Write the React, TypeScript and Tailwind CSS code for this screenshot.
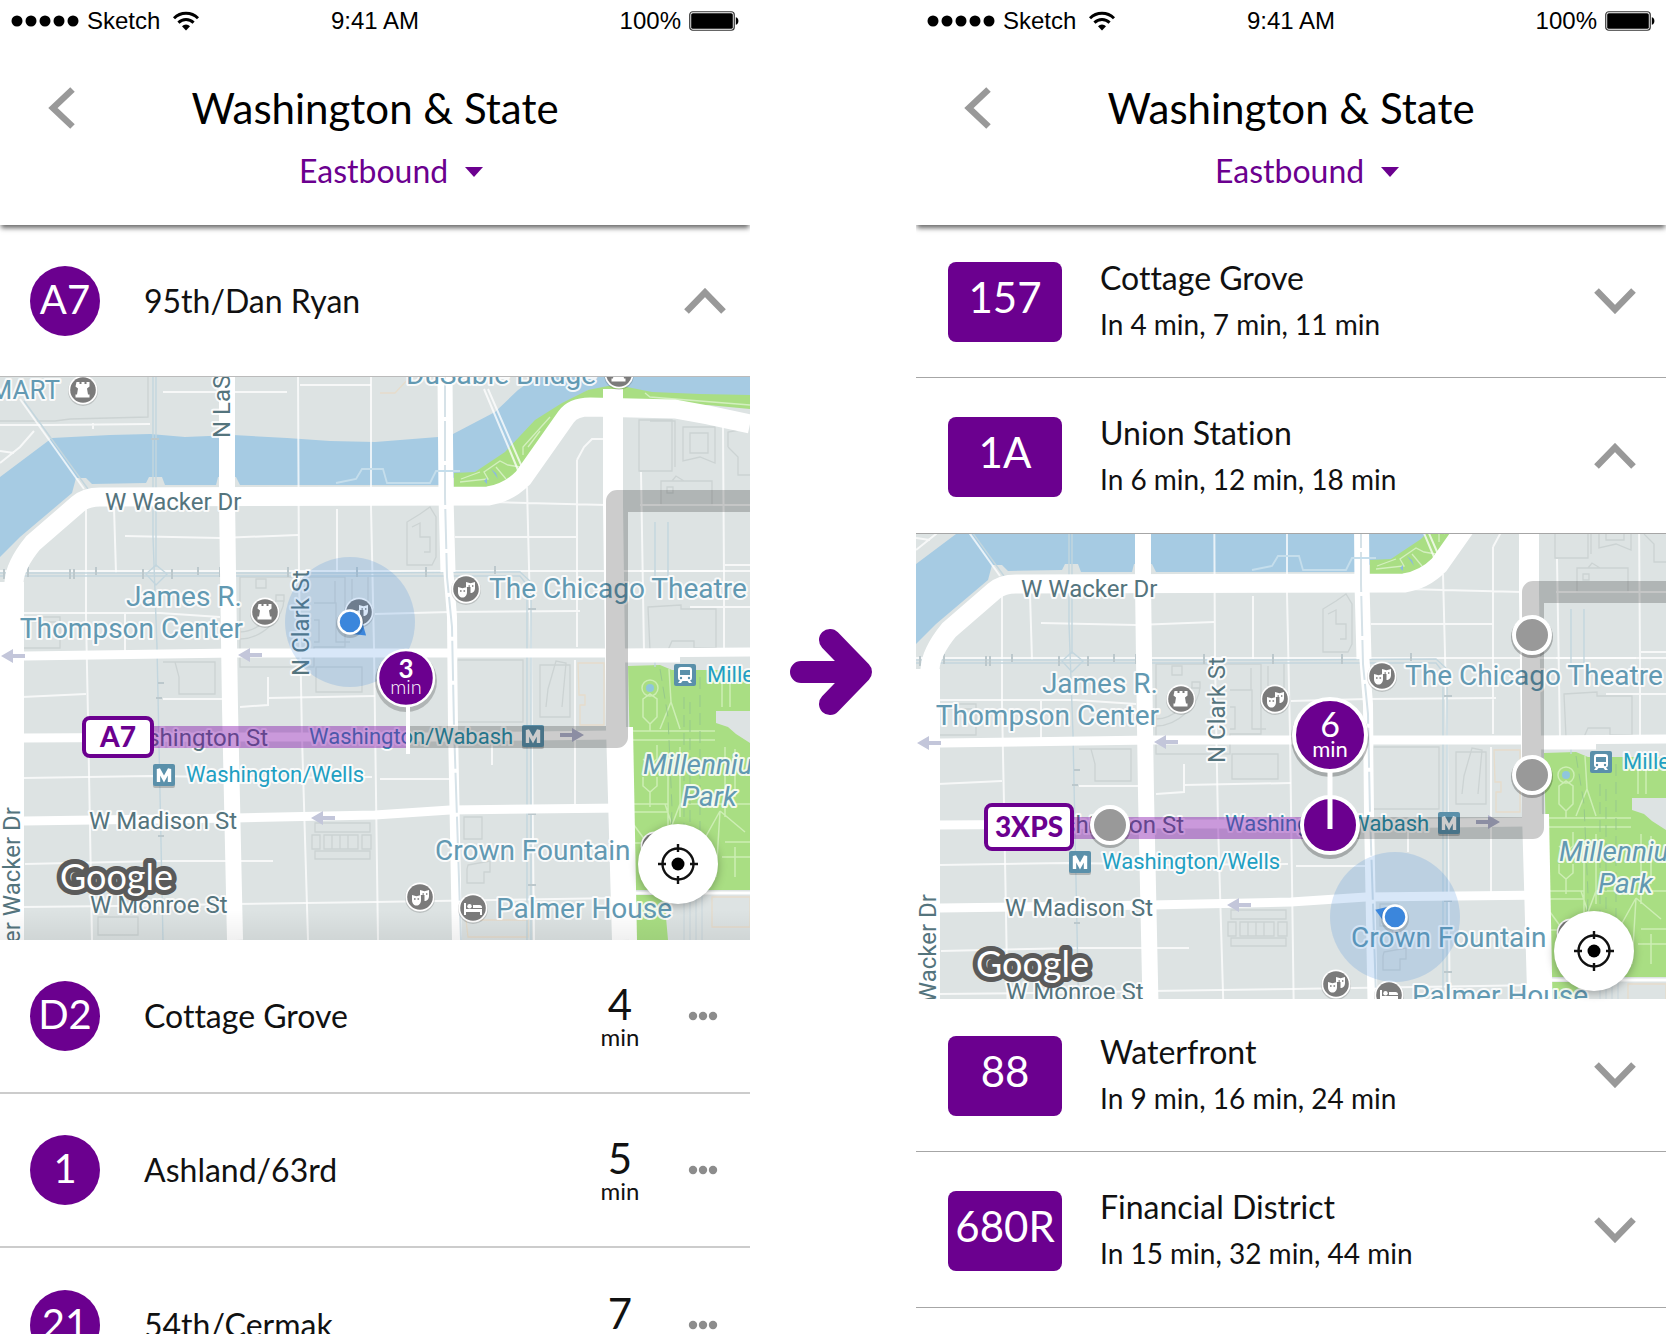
import React from 'react';

const PURPLE = '#6b008f';

/* ---------- small icons ---------- */

function WifiIcon() {
  return (
    <svg viewBox="0 0 28 20" className="w-7 h-5" aria-hidden="true">
      <g fill="none" stroke="#000" strokeWidth="2.9">
        <path d="M2 7.2a17 17 0 0 1 24 0" />
        <path d="M6.4 11.6a10.8 10.8 0 0 1 15.2 0" />
      </g>
      <path d="M14 19.4l-4-4.2a5.8 5.8 0 0 1 8 0z" fill="#000" />
    </svg>
  );
}

function BatteryIcon() {
  return (
    <svg viewBox="0 0 50 20" className="w-[50px] h-5" aria-hidden="true">
      <rect x="0.75" y="0.75" width="44.5" height="18.5" rx="3" fill="none" stroke="#333" strokeWidth="1.2" />
      <rect x="2.2" y="2.2" width="41.6" height="15.6" rx="1.6" fill="#000" />
      <path d="M46.8 6.2c2 .6 2.6 2 2.6 3.8s-.6 3.2-2.6 3.8z" fill="#000" />
    </svg>
  );
}

function Chevron({ up = false }: { up?: boolean }) {
  return (
    <svg viewBox="0 0 42 26" className="w-[42px] h-[26px]" aria-hidden="true">
      <path d={up ? 'M2.5 23.5L21 4.5L39.500 23.500' : 'M2.5 2.5L21 21.5L39.500 2.500'} fill="none" stroke="#999" strokeWidth="6.500" />
    </svg>
  );
}

function Dots() {
  return (
    <svg viewBox="0 0 30 10" className="w-[30px] h-[10px]" aria-hidden="true">
      <g fill="#8c8c8c">
        <circle cx="5" cy="5" r="4.200" />
        <circle cx="15" cy="5" r="4.200" />
        <circle cx="25" cy="5" r="4.200" />
      </g>
    </svg>
  );
}

/* ---------- shared phone chrome ---------- */

function StatusBar() {
  return (
    <div className="grid grid-cols-3 items-center h-[42px] px-[11px] font-['Liberation_Sans',sans-serif] text-2xl leading-6 text-black">
      <div className="flex items-center gap-2">
        <svg viewBox="0 0 68 12" className="w-[68px] h-3" aria-hidden="true">
          {[6, 20, 34, 48, 62].map((x) => (
            <circle key={x} cx={x} cy="6" r="5.500" />
          ))}
        </svg>
        <span>Sketch</span>
        <span className="pl-1">
          <WifiIcon />
        </span>
      </div>
      <div className="text-center">9:41 AM</div>
      <div className="flex items-center justify-end gap-2">
        <span>100%</span>
        <BatteryIcon />
      </div>
    </div>
  );
}

function Header({ id }: { id: string }) {
  return (
    <header className="relative z-10 h-[225px] bg-white shadow-[0_4px_5px_-1px_rgba(0,0,0,0.6)]">
      <StatusBar />
      <div className="grid grid-cols-[80px_1fr_80px] items-center pt-[38px]">
        <button type="button" aria-label="Back" className="justify-self-end pr-1">
          <svg viewBox="0 0 28 42" className="w-7 h-[42px]" aria-hidden="true">
            <path d="M24.500 2.500L5 21L24.500 39.500" fill="none" stroke="#999" strokeWidth="6.500" />
          </svg>
        </button>
        <h1 className="text-center text-[42px] leading-[56px] text-black whitespace-nowrap">Washington &amp; State</h1>
      </div>
      <div className="flex justify-center pt-[11px] pl-8">
        <label htmlFor={id} className="sr-only">
          Direction
        </label>
        <div className="relative">
          <select id={id} className="appearance-none bg-transparent w-[184px] h-12 text-[32px] leading-[48px] text-[#6b008f]">
            <option>Eastbound</option>
            <option>Westbound</option>
          </select>
          <svg viewBox="0 0 18 10" className="pointer-events-none absolute right-0 top-5 w-[18px] h-[10px]" aria-hidden="true">
            <path d="M0 0H18L9 10z" fill={PURPLE} />
          </svg>
        </div>
      </div>
    </header>
  );
}

/* ---------- map drawing ---------- */

function Poi({ x, y, kind }: { x: number; y: number; kind: 'rook' | 'mask' | 'bed' }) {
  return (
    <g transform={`translate(${x} ${y})`}>
      <circle cy="1" r="15" fill="#000" opacity="0.15" />
      <circle r="14.500" fill="#fff" />
      <circle r="12.800" fill="#7b7b7b" />
      {kind === 'rook' && (
        <path fill="#fff" d="M-6.500-8h3v2h2v-2h3v2h2v-2h3v4.500l-2.500 2 1 6h1.500v3h-14v-3h1.500l1-6-2.500-2z" />
      )}
      {kind === 'mask' && (
        <>
          <path fill="#fff" d="M0-7l4.500 1.200L9-7v6c0 3-2 5-4.500 5V-2H0z" />
          <path fill="#fff" d="M-8-2l4.500 1.200L1-2v5c0 3.500-2 5.500-4.500 5.500S-8 6.500-8 3z" />
          <path d="M-6 2h1.600M-2.500 2h1.600M2.500-3h1.400M6-3h1.400" stroke="#7b7b7b" strokeWidth="1.300" />
        </>
      )}
      {kind === 'bed' && (
        <>
          <path fill="#fff" d="M-9-5h2v6H9v6H7V4H-7v3h-2zM0-3h6.500q2.500 0 2.500 2.500V0H0z" />
          <circle cx="-3.500" cy="-1.800" r="2.200" fill="#fff" />
        </>
      )}
    </g>
  );
}

function Metro({ x, y }: { x: number; y: number }) {
  return (
    <g transform={`translate(${x} ${y})`}>
      <rect x="-11" y="-10" width="22" height="23" rx="2" fill="#000" opacity="0.2" />
      <rect x="-11" y="-11" width="22" height="22" rx="2" fill="#5a90aa" />
      <path d="M-5.500 7V-6L0 4L5.500-6V7" fill="none" stroke="#fff" strokeWidth="3.400" />
    </g>
  );
}

function StreetArrow({ x, y, right = false }: { x: number; y: number; right?: boolean }) {
  return (
    <path
      transform={`translate(${x} ${y})${right ? ' rotate(180)' : ''}`}
      d="M-12 0L0-7V-2H12V2H0V7z"
      fill={right ? '#b0b2cc' : '#c3c6da'}
    />
  );
}

function BaseMap() {
  return (
    <g>
      <rect width="750" height="563" fill="#dde3e3" />

      {/* river */}
      <path
        fill="#a6cbe3"
        d="M0 100L52 61L110 58L150 57L185 60L233 58L287 61L330 64L375 65L438 60L453 57L495 35L518 13L536 0H750V22H610L588 13L540 50L500 90L455 100L440 108H240L236 100H218L216 108H165L162 100H149L146 106L92 107L86 101H76L72 116L20 160L0 180z"
      />
      {/* riverwalk */}
      <path
        fill="#a9de83"
        d="M454 96L475 95L505 75L535 43L562 26L588 13L608 9L627 10L652 15L700 17L750 18V32L708 28L610 26L580 30L540 70L518 98L492 111H454z"
      />
      <g fill="none" stroke="#d3efbf" strokeWidth="1.300">
        <path d="M460 105L488 102L484 95L500 84L508 88L520 90M461 102L480 95M496 90L506 102M523 78V70L550 40M528 70L540 54M645 16L650 20L750 28" />
      </g>
      <path d="M491 92l5 4 2 6zM484 104l3-3v6z" fill="#8db9de" />

      {/* millennium park */}
      <path fill="#a9de83" d="M628 289L660 288L672 293H750V513H633zM633 518H664L668 563H633z" />
      <path fill="#dde3e3" d="M716 334H750V366L736 357L728 350L716 346z" />
      <circle cx="650" cy="311" r="4" fill="#8fc6dc" />
      <g fill="none" stroke="#cdeeb4" strokeWidth="1.500">
        <circle cx="650" cy="311" r="8" />
        <path d="M643 322L650 317L657 322V340L650 347L643 340zM630 354H715M632 363H715M669 292L671 325L660 352M671 325L680 352M722 292V330M730 292V330M643 400V409L650 415L657 409V400M643 382L650 388L657 382V368M650 415V430M630 427H668M630 435H668M668 380V460M680 370V440M634 448L650 470M665 427L672 448L680 427H750M720 434L700 470M720 434L745 455M720 434L716 500M650 347V354M634 466H650V500M725 465H750M722 480H750M735 470V500M725 370V440M735 372V420" />
      </g>
      <g fill="none" stroke="#97c98b" strokeWidth="1" strokeDasharray="12 6">
        <path d="M660 292L668 340L672 430L670 500M684 320V500M690 325V512M700 300V512" />
      </g>
      <path d="M640 513H750V563H670L664 516z" fill="#dde3e3" />
      <path d="M684 516V563M690 516V563M696 516V563M702 516V563" stroke="#c9d6dc" strokeWidth="1" />

      {/* building outlines */}
      <g fill="none" stroke="#ccd3d3" strokeWidth="1.300">
        <path d="M0 44H55L70 42L148 40V0M163 285H175L179 300V317H215V285zM240 200H345V270H314V290H240zM256 202h10v9h-10zM276 218h8v6h-8zM240 262C262 262 284 240 284 222M240 255C258 255 274 238 276 222M314 226H336V265H350M335 226V204M352 202V226H368V200M314 243h5v22h-5" />
        <path d="M407 188V145L420 137L430 130L436 140V180L432 188zM412 150L420 146V160H430V175H424M457 283H523V345H457zM316 290H362V315H316zM540 288H570V340H540zM546 330L548 312L556 284L566 286L562 330M648 230L681 228V232H716V271H694V264H672L668 273H650z" />
        <path d="M639 43H672V94H639zM650 44H675V90M683 50H715V86L700 80L683 84zM690 56H708V76H690zM728 70V55L745 52M728 70L738 80V98H750M661 104H712V128H661zM667 110h6v6h-6zM672 104L676 99L684 104" />
        <path d="M315 446H370V455H315zM312 458H320V472H312zM324 458H358V472H324zM332 458V472M340 458V472M348 458V472M362 458H371V472H362zM315 474H370V482H315zM464 440H482V462H464zM468 488L490 484V495H484V506H467V492zM98 540H138V558H98zM22 240H60V271H22zM26 245H56" />
      </g>
      <g fill="none" stroke="#e6dccb" strokeWidth="1.300">
        <path d="M578 286H604V348H580V328H585V318H579zM466 543H528V560H468zM712 520H750V550H712zM380 16H395L410 0" />
      </g>

      {/* alleys and minor streets */}
      <g fill="none" stroke="#fff" strokeOpacity="0.75" strokeWidth="2">
        <path d="M0 48H50L150 47M163 15H287M300 8H371M34 54L20 70L0 86M0 74L14 76M125 159L220 161L298 158M22 236L160 236L220 240M125 277V237M22 320L86 317M163 322H222M240 330L268 328V300M268 321L375 319M24 401L150 399L225 400M240 401L372 400M25 487L160 484L273 484M22 530L120 529L235 527L375 525L620 521M93 46V52" />
        <path d="M86 130L86 240L88 340L92 563M114 130L116 196M298 0L299 200L302 360L308 563M337 132V195M371 0V130L374 270L378 563M527 110L531 270L534 563M577 83V270M577 83L584 70L592 62H605M575 283V430M641 95L644 275M723 50L724 200L724 275M455 124L527 126L606 128M455 160H577M375 237L450 235L580 234M380 402H450M492 360V388M640 194H720M690 230H750M640 128H750M725 188H750" />
        <path d="M0 194H750" />
        <path d="M484 12L518 93M488 12L522 90" />
        <path d="M20 22L84 112" />
      </g>

      {/* elevated tracks */}
      <g fill="none" stroke="#c3d6de" strokeWidth="1.400">
        <path d="M0 196H360L520 195L531 205V563M0 199H520L527 208V563M153 0V160L157 270L163 563M156 0V190M443 0V120M448 0V120L447 190M24 24L88 112M655 145V200M668 145V200M655 275V290" />
        <path d="M156 188L146 197L156 208L167 197z" />
      </g>
      <g stroke="#bcc8cc" strokeWidth="2">
        <path d="M4 192v10M28 190v10M70 192v10M74 192v10M96 190v8M143 192v10M172 192v10M198 190v8M220 190v10M288 190v10M357 190v10M426 190v10M495 189v8M158 306h6M156 321h6M158 459h6M528 437h8M528 232h8M528 508h8M151 62h8" />
      </g>

      {/* arterial streets */}
      <g fill="none" stroke="#fff">
        <path d="M0 279L25 279L235 276L450 276L620 276L750 275" strokeWidth="9" />
        <path d="M615 281H680" strokeWidth="9" />
        <path d="M22 361L235 360L450 360L615 358" strokeWidth="9" />
        <path d="M24 444L235 441L375 438L450 433L622 431" strokeWidth="9" />
        <path d="M227 0V120L228 195L230 330L235 563" strokeWidth="16" />
        <path d="M445 0L446 120L448 195" strokeWidth="15" />
        <path d="M448 190L452 240L453 350L457 563" strokeWidth="10" />
        <path d="M613 12V128L616 350L622 563" strokeWidth="20" />
        <path d="M629 350L633 563" strokeWidth="8" />
        <path d="M632 516H750" strokeWidth="3" />
        <path
          d="M13 563L12 420L12 272L14 205Q15 188 33 166L78 127Q86 120 100 120L488 119Q508 116 523 101L566 40Q573 30 590 30L675 32L708 38L750 47"
          strokeWidth="19"
          strokeLinejoin="round"
        />
        <path d="M12 205V563" strokeWidth="24" />
      </g>
      <path d="M445 0V120L447 200L452 250L454 350L461 563" fill="none" stroke="#d6e2e8" strokeWidth="2" strokeDasharray="40 4" />
      <path d="M336 106L356 102L362 92H375L383 92L387 106H430L436 94H460" fill="none" stroke="#c5deec" strokeWidth="1.800" />

      <StreetArrow x={13} y={279} />
      <StreetArrow x={250} y={278} />
      <StreetArrow x={323} y={441} />

      <Poi x={83} y={13} kind="rook" />
      <Poi x={265} y={235} kind="rook" />
      <Poi x={359} y={235} kind="mask" />
      <Poi x={466} y={212} kind="mask" />
      <Poi x={420} y={520} kind="mask" />
      <Poi x={473} y={531} kind="bed" />
      <Poi x={619} y={-3} kind="rook" />
      <Poi x={655} y={469} kind="mask" />
      <Metro x={164} y={398} />
      <Metro x={533} y={359} />
      <StreetArrow x={572} y={358} right />
      <g transform="translate(685 298)">
        <rect x="-11" y="-11" width="22" height="22" rx="2" fill="#5a90aa" />
        <path fill="#fff" d="M-4-8H4q3 0 3 3V3q0 2-2 2.500L7 8H4L2.500 6h-5L-4 8h-3l2-2.500Q-7 5-7 3v-8q0-3 3-3z" />
        <path fill="#5a90aa" d="M-5-5H5V0H-5z" />
        <circle cx="-4" cy="3" r="1.200" fill="#5a90aa" />
        <circle cx="4" cy="3" r="1.200" fill="#5a90aa" />
      </g>

      {/* labels */}
      <g className="font-['Roboto',sans-serif]" stroke="#fff" strokeOpacity="0.85" strokeWidth="4" strokeLinejoin="round" paintOrder="stroke">
        <g fill="#54747d" fontSize="24">
          <text x="105" y="133">W Wacker Dr</text>
          <text x="268" y="369" textAnchor="end">W Washington St</text>
          <text x="89" y="452">W Madison St</text>
          <text x="90" y="536">W Monroe St</text>
          <text transform="translate(230 61) rotate(-90)">N LaSalle St</text>
          <text transform="translate(309 299) rotate(-90)">N Clark St</text>
          <text transform="translate(20 430) rotate(-90)" textAnchor="end">N Upper Wacker Dr</text>
        </g>
        <g fill="#6299b2" fontSize="28">
          <text x="60" y="22" textAnchor="end" fontSize="26">MART</text>
          <text x="406" y="7">DuSable Bridge</text>
          <text x="242" y="229" textAnchor="end">James R.</text>
          <text x="243" y="261" textAnchor="end">Thompson Center</text>
          <text x="489" y="221">The Chicago Theatre</text>
          <text x="435" y="483">Crown Fountain</text>
          <text x="496" y="541">Palmer House</text>
          <g fontStyle="italic">
            <text x="643" y="397">Millennium</text>
            <text x="682" y="429">Park</text>
          </g>
        </g>
        <g fill="#229fc2" fontSize="22">
          <text x="186" y="405">Washington/Wells</text>
          <text x="309" y="367" fill="#2f93ae">Washington/Wabash</text>
          <text x="707" y="305">Millennium St</text>
        </g>
      </g>
      <text
        x="60"
        y="513"
        className="font-['Lato',sans-serif]"
        fontSize="36"
        fill="#fff"
        stroke="#5a5a5a"
        strokeWidth="10"
        strokeLinejoin="round"
        paintOrder="stroke"
      >
        Google
      </text>
    </g>
  );
}

function Route({ from, split, top, bottom }: { from: number; split: number; top: number; bottom: number }) {
  return (
    <g fill="none" strokeWidth="22" strokeLinejoin="round">
      <path d={`M${split} ${bottom}H617V${top}H750`} stroke="#000" strokeOpacity="0.2" />
      <path d={`M${from} ${bottom}H${split}`} stroke="#7b00a5" strokeOpacity="0.4" />
    </g>
  );
}

function Stop({ x, y }: { x: number; y: number }) {
  return (
    <g>
      <circle cx={x} cy={y + 2} r="21" fill="#000" opacity="0.25" />
      <circle cx={x} cy={y} r="18" fill="#999" stroke="#fff" strokeWidth="4" />
    </g>
  );
}

function RouteTag({ x, y, w, h, label }: { x: number; y: number; w: number; h: number; label: string }) {
  return (
    <g>
      <rect x={x + 2} y={y + 2} width={w - 4} height={h - 4} rx="6" fill="#fff" stroke={PURPLE} strokeWidth="4" />
      <text x={x + w / 2} y={y + h / 2 + 10} textAnchor="middle" fontSize="28" fontWeight="900" fill={PURPLE}>
        {label}
      </text>
    </g>
  );
}

function UserLocation({ x, y, heading }: { x: number; y: number; heading: number }) {
  return (
    <g transform={`translate(${x} ${y})`}>
      <circle r="65" fill="#3b86dc" fillOpacity="0.2" />
      <path transform={`rotate(${heading})`} d="M21 0L9-8V8z" fill="#3b86dc" />
      <circle cy="2" r="14" fill="#000" opacity="0.15" />
      <circle r="11.500" fill="#3b86dc" stroke="#fff" strokeWidth="2.500" />
    </g>
  );
}

function LocateIcon() {
  return (
    <svg viewBox="0 0 42 42" className="w-[42px] h-[42px]" aria-hidden="true">
      <g fill="none" stroke="#111" strokeWidth="2.400">
        <circle cx="21" cy="21" r="15.500" />
        <path d="M21 1V9M21 33V41M1 21H9M33 21H41" />
      </g>
      <circle cx="21" cy="21" r="6.500" fill="#000" />
    </svg>
  );
}

function LocateButton() {
  return (
    <button
      type="button"
      aria-label="Center on my location"
      className="flex items-center justify-center w-20 h-20 rounded-full bg-white shadow-[0_2px_10px_rgba(0,0,0,0.3)]"
    >
      <LocateIcon />
    </button>
  );
}

function LeftMap() {
  return (
    <div className="relative">
      <svg viewBox="0 0 750 563" className="block w-full h-auto font-['Lato',sans-serif]" role="img" aria-label="Map of route A7">
        <defs>
          <linearGradient id="map-fade" x1="0" y1="0" x2="0" y2="1">
            <stop offset="0" stopColor="#000" stopOpacity="0" />
            <stop offset="1" stopColor="#000" stopOpacity="0.06" />
          </linearGradient>
        </defs>
        <BaseMap />
        <rect y="533" width="750" height="30" fill="url(#map-fade)" />
        <UserLocation x={350} y={245} heading={40} />
        <Route from={150} split={406} top={124} bottom={360} />
        <RouteTag x={82} y={339} w={72} h={42} label="A7" />
        <circle cx="406" cy="304" r="31" fill="#000" opacity="0.2" />
        <path d="M408 325V377" stroke="#fff" strokeWidth="4" />
        <circle cx="406" cy="301" r="28" fill={PURPLE} stroke="#fff" strokeWidth="2.500" />
        <g fill="#fff" textAnchor="middle">
          <text x="406" y="301" fontSize="26" fontWeight="700">3</text>
          <text x="406" y="317" fontSize="20" fontWeight="300">min</text>
        </g>
      </svg>
      <div className="absolute right-8 bottom-9">
        <LocateButton />
      </div>
    </div>
  );
}

function RightMap() {
  return (
    <div className="relative">
      <svg viewBox="0 70 750 465" className="block w-full h-auto font-['Lato',sans-serif]" role="img" aria-label="Map of route 3XPS">
        <BaseMap />
        <UserLocation x={479} y={453} heading={200} />
        <Route from={154} split={414} top={128} bottom={364} />
        <Stop x={616} y={171} />
        <Stop x={616} y={311} />
        <Stop x={194} y={361} />
        <RouteTag x={68} y={339} w={90} h={48} label="3XPS" />
        <circle cx="414" cy="364" r="31" fill="#000" opacity="0.25" />
        <circle cx="414" cy="361" r="28" fill={PURPLE} stroke="#fff" strokeWidth="4" />
        <circle cx="414" cy="274" r="39" fill="#000" opacity="0.25" />
        <path d="M414 305V365" stroke="#fff" strokeWidth="5" />
        <circle cx="414" cy="271" r="36" fill={PURPLE} stroke="#fff" strokeWidth="4" />
        <g fill="#fff" textAnchor="middle">
          <text x="414" y="273" fontSize="34">6</text>
          <text x="414" y="293" fontSize="22">min</text>
        </g>
      </svg>
      <div className="absolute right-8 bottom-2">
        <LocateButton />
      </div>
    </div>
  );
}

/* ---------- rows ---------- */

function Bullet({ children }: { children: React.ReactNode }) {
  return (
    <div className="flex justify-center w-[70px] h-[70px] pt-3 rounded-full bg-[#6b008f] text-[40px] leading-[42px] text-white">
      {children}
    </div>
  );
}

function ArrivalRow({ route, name, minutes }: { route: string; name: string; minutes: number }) {
  return (
    <li className="grid grid-cols-[70px_1fr_56px_70px] items-center h-[154px] pl-[30px] pr-8 border-b-2 border-[#ccc] last:border-b-0">
      <Bullet>{route}</Bullet>
      <span className="pl-11 text-[32px] leading-10">{name}</span>
      <div className="flex flex-col items-center">
        <span className="text-[42px] leading-[42px]">{minutes}</span>
        <span className="text-2xl leading-6">min</span>
      </div>
      <button type="button" aria-label={`More about ${name}`} className="justify-self-end">
        <Dots />
      </button>
    </li>
  );
}

function RouteRow({ route, name, times, open = false, first = false }: { route: string; name: string; times: string; open?: boolean; first?: boolean }) {
  return (
    <div
      className={`grid grid-cols-[114px_1fr_42px] items-end pl-8 pr-[30px] border-b border-[#a6a6a6] ${first ? 'h-[153px] pb-[35px]' : 'h-[156px] pb-9'}`}
    >
      <div className="flex justify-center h-20 pt-[14px] rounded-lg bg-[#6b008f] text-[42px] leading-[42px] text-white">{route}</div>
      <div className="pl-[38px]">
        <div className="text-[32px] leading-10">{name}</div>
        <div className="pt-2 text-[28px] leading-9">{times}</div>
      </div>
      <button type="button" aria-expanded={open} aria-label={`${open ? 'Hide' : 'Show'} map for ${name}`} className="pb-7">
        <Chevron up={open} />
      </button>
    </div>
  );
}

/* ---------- screens ---------- */

function BeforeScreen() {
  return (
    <section className="min-w-0 flex-1 overflow-hidden bg-white">
      <Header id="direction-before" />
      <div className="grid grid-cols-[70px_1fr_42px] items-center h-[152px] pl-[30px] pr-6 border-b border-[#bbb]">
        <Bullet>A7</Bullet>
        <span className="pl-11 text-[32px] leading-10">95th/Dan Ryan</span>
        <button type="button" aria-expanded="true" aria-label="Hide map for 95th/Dan Ryan">
          <Chevron up />
        </button>
      </div>
      <LeftMap />
      <ul>
        <ArrivalRow route="D2" name="Cottage Grove" minutes={4} />
        <ArrivalRow route="1" name="Ashland/63rd" minutes={5} />
        <ArrivalRow route="21" name="54th/Cermak" minutes={7} />
      </ul>
    </section>
  );
}

function AfterScreen() {
  return (
    <section className="min-w-0 flex-1 overflow-hidden bg-white">
      <Header id="direction-after" />
      <RouteRow first route="157" name="Cottage Grove" times="In 4 min, 7 min, 11 min" />
      <RouteRow open route="1A" name="Union Station" times="In 6 min, 12 min, 18 min" />
      <RightMap />
      <RouteRow first route="88" name="Waterfront" times="In 9 min, 16 min, 24 min" />
      <RouteRow route="680R" name="Financial District" times="In 15 min, 32 min, 44 min" />
    </section>
  );
}

export default function App() {
  return (
    <main className="flex h-screen overflow-hidden bg-white font-['Lato',sans-serif] text-[#111] [font-variant-ligatures:none]">
      <BeforeScreen />
      <div className="flex items-center justify-center w-[166px] pt-[10px] pr-1 shrink-0">
        <svg viewBox="0 0 84 88" className="w-[84px] h-[88px]" role="img" aria-label="becomes">
          <path d="M12 44H66M41 12L72 44L41 76" fill="none" stroke={PURPLE} strokeWidth="22" strokeLinecap="round" strokeLinejoin="round" />
        </svg>
      </div>
      <AfterScreen />
    </main>
  );
}
